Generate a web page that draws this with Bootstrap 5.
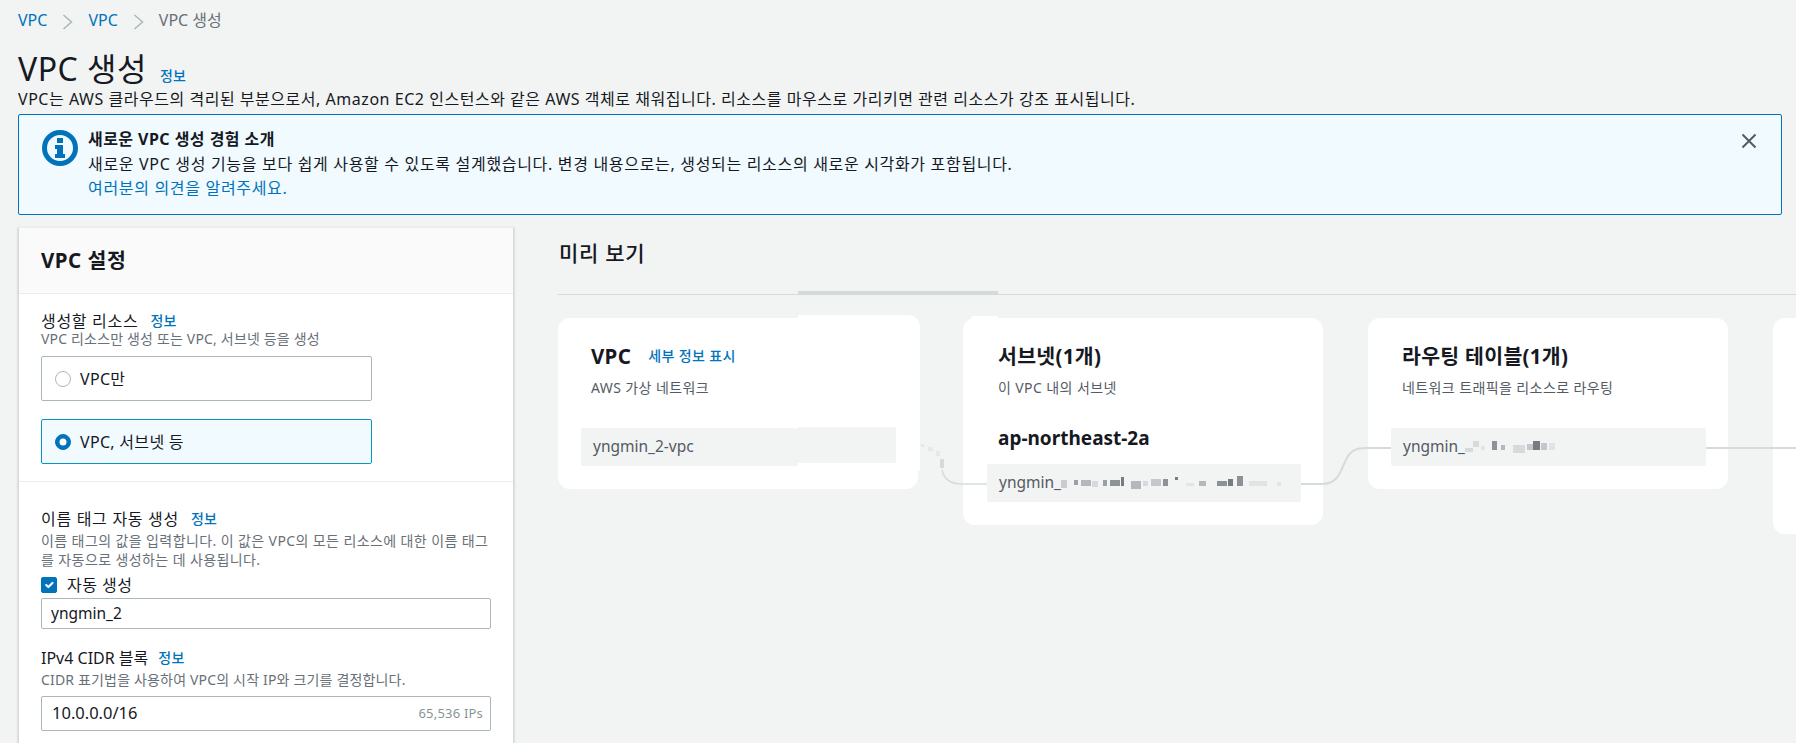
<!DOCTYPE html>
<html lang="ko">
<head>
<meta charset="utf-8">
<title>VPC 생성</title>
<link href="https://cdn.jsdelivr.net/npm/bootstrap@5.3.0/dist/css/bootstrap.min.css" rel="stylesheet">
<style>
html,body{height:743px;overflow:hidden;background:#f2f3f3;}
body{font-family:"Noto Sans","Noto Sans CJK KR",sans-serif;font-size:16px;letter-spacing:.5px;color:#16191f;width:1796px;}
a{text-decoration:none;color:#0073bb;}
.crumbs{height:40px;padding-left:18px;margin:0;align-items:center;font-size:16px;gap:15px;letter-spacing:0;}
.crumbs .breadcrumb-item{padding:0;}
.crumbs .breadcrumb-item::before{display:none;}
.crumbs .breadcrumb-item.active{color:#687078;}
.page-head{padding:11px 0 0 18px;height:49px;gap:13px;}
.page-title{font-size:32px;line-height:36px;font-weight:400;margin:0;letter-spacing:.5px;}
.info-link{font-size:14px;font-weight:500;letter-spacing:.2px;}
.page-desc{margin:0 0 5px 18px;line-height:20px;height:20px;white-space:nowrap;letter-spacing:.53px;}
.notice{margin:0 14px 12px 18px;height:101px;border:1px solid #0073bb;border-radius:2px;background:#f1faff;padding:12px 0 0 23px;position:relative;gap:10px;}
.notice-icon{margin-top:3px;flex:none;}
.notice-line{line-height:24.5px;height:24.5px;white-space:nowrap;letter-spacing:.68px;}
.notice-title{font-weight:700;letter-spacing:.45px;}
.notice-close{position:absolute;left:1721px;top:17px;}
.main-row{height:560px;}
.settings{width:496px;margin-left:18px;flex:none;border-radius:0;border:0;border-left:1px solid #d5dbdb;border-right:1px solid #d5dbdb;border-top:1px solid #eaeded;box-shadow:0 1px 2px rgba(0,28,36,.25);}
.settings .card-header{height:66px;background:#fafafa;border-bottom:1px solid #eaeded;border-radius:0;padding:0 0 0 22px;font-size:20.5px;font-weight:700;line-height:64px;}
.settings .card-body{padding:0;}
.block-one{padding:17px 22px 17px;border-bottom:1px solid #eaeded;}
.block-two{padding:27px 22px 0;}
.field-label{line-height:20px;height:20px;gap:12px;white-space:nowrap;letter-spacing:.7px;}
.field-hint{font-size:14px;color:#687078;line-height:16px;letter-spacing:.17px;}
.choice{width:331px;height:45px;border:1px solid #aab7b8;border-radius:2px;padding-left:13px;gap:9px;margin-top:18px;background:#fff;letter-spacing:.3px;}
.choice-first{margin-top:9px;}
.choice-on{border-color:#0a94c2;background:#f1faff;}
.choice .form-check-input,.auto-check .form-check-input{margin:0;width:16px;height:16px;flex:none;border-color:#aab7b8;}
.choice .form-check-input:checked,.auto-check .form-check-input:checked{background-color:#0073bb;border-color:#0073bb;}
.auto-check{height:18px;margin-top:7px;gap:10px;line-height:18px;}
.auto-check .form-check-input{border-radius:2px;}
.hint-tall{line-height:19px;margin-top:2px;width:450px;letter-spacing:.4px;}
.label-cidr{margin-top:19px;letter-spacing:0;gap:10px;}
.hint-cidr{margin-top:4px;}
.text-input{height:31px;width:450px;border:1px solid #aab7b8;border-radius:2px;padding:0 9px 2px;font-size:15.5px;letter-spacing:0;color:#16191f;margin-top:4px;font-family:inherit;}
.cidr-wrap{width:450px;height:35px;margin-top:8px;}
.cidr-wrap .text-input{height:35px;margin:0;padding-left:10px;font-size:16.5px;}
.cidr-size{position:absolute;right:8px;top:0;line-height:35px;font-size:13px;letter-spacing:.2px;color:#879596;}
.preview{flex:1 1 auto;padding-left:44px;min-width:0;}
.preview-title{font-size:21px;font-weight:500;line-height:24px;height:65px;padding:14px 0 0 1px;margin:0;letter-spacing:.7px;}
.preview-rule{height:3px;border-bottom:1px solid #d5dbdb;position:relative;}
.preview-thumb{position:absolute;left:240px;top:-1px;width:200px;height:3px;background:#d5dbdb;}
.diagram{position:relative;height:400px;}
.node{position:absolute;background:#fff;border-radius:12px;top:23px;}
.node-a{left:0;width:360px;height:171px;}
.node-b{left:405px;width:360px;height:207px;}
.node-c{left:810px;width:360px;height:171px;}
.node-d{left:1215px;width:360px;height:216px;}
.patch{position:absolute;background:#fff;}
.patch-a{left:240px;top:20px;width:122px;height:156px;border-radius:0 12px 0 0;}
.patch-b{left:414px;top:21px;width:26px;height:8px;}
.node-head{position:absolute;top:26px;font-size:20.5px;font-weight:700;line-height:24px;white-space:nowrap;gap:17px;align-items:center;letter-spacing:.3px;}
.node-head a{font-size:14px;font-weight:500;letter-spacing:.4px;}
.node-sub{position:absolute;top:61px;font-size:14px;line-height:18px;color:#545b64;white-space:nowrap;letter-spacing:.4px;}
.node-zone{position:absolute;top:108px;left:35px;font-size:19px;font-weight:700;line-height:24px;letter-spacing:0;}
.name-row{position:absolute;background:#f2f3f3;height:38px;border-radius:2px;padding-left:12px;font-size:15.5px;letter-spacing:0;color:#545b64;white-space:nowrap;align-items:center;}
.name-row svg{flex:none;filter:blur(.6px);}
.row-a{left:23px;top:110px;width:217px;}
.row-a2{position:absolute;left:240px;top:132px;width:98px;height:36px;background:#f2f3f3;}
.row-b{left:24px;top:146px;width:314px;}
.row-c{left:23px;top:110px;width:315px;}
.wires{position:absolute;left:0;top:0;overflow:visible;pointer-events:none;}
.left-33{left:33px;}
.left-34{left:34px;}
.left-35{left:35px;}
</style>
</head>
<body>
<nav aria-label="breadcrumb">
  <ol class="breadcrumb crumbs d-flex">
    <li class="breadcrumb-item"><a href="#">VPC</a></li>
    <li><svg width="11" height="16" viewBox="0 0 11 16"><path d="M1.5 1l8 7-8 7" fill="none" stroke="#aab7b8" stroke-width="1.5"/></svg></li>
    <li class="breadcrumb-item"><a href="#">VPC</a></li>
    <li><svg width="11" height="16" viewBox="0 0 11 16"><path d="M1.5 1l8 7-8 7" fill="none" stroke="#aab7b8" stroke-width="1.5"/></svg></li>
    <li class="breadcrumb-item active" aria-current="page">VPC 생성</li>
  </ol>
</nav>
<header class="page-head d-flex align-items-baseline">
  <h1 class="page-title">VPC 생성</h1>
  <a class="info-link" href="#">정보</a>
</header>
<p class="page-desc">VPC는 AWS 클라우드의 격리된 부분으로서, Amazon EC2 인스턴스와 같은 AWS 객체로 채워집니다. 리소스를 마우스로 가리키면 관련 리소스가 강조 표시됩니다.</p>
<section class="notice d-flex">
  <svg class="notice-icon" width="36" height="36" viewBox="0 0 36 36"><circle cx="18" cy="18" r="15.5" fill="none" stroke="#0073bb" stroke-width="5"/><rect x="15" y="8" width="6" height="5" fill="#0073bb"/><path d="M13 15h8v9h2v4H13v-4h2v-5h-2z" fill="#0073bb"/></svg>
  <div>
    <div class="notice-line notice-title">새로운 VPC 생성 경험 소개</div>
    <div class="notice-line">새로운 VPC 생성 기능을 보다 쉽게 사용할 수 있도록 설계했습니다. 변경 내용으로는, 생성되는 리소스의 새로운 시각화가 포함됩니다.</div>
    <div class="notice-line"><a href="#">여러분의 의견을 알려주세요.</a></div>
  </div>
  <svg class="notice-close" width="18" height="18" viewBox="0 0 18 18" aria-label="닫기"><path d="M2.5 2.5l13 13M15.5 2.5l-13 13" stroke="#545b64" stroke-width="2" fill="none"/></svg>
</section>
<div class="main-row d-flex">
  <section class="card settings">
    <div class="card-header">VPC 설정</div>
    <div class="card-body">
      <div class="block-one">
        <div class="field-label d-flex"><span>생성할 리소스</span><a class="info-link" href="#">정보</a></div>
        <div class="field-hint">VPC 리소스만 생성 또는 VPC, 서브넷 등을 생성</div>
        <label class="choice choice-first d-flex align-items-center"><input class="form-check-input" type="radio" name="res"><span>VPC만</span></label>
        <label class="choice choice-on d-flex align-items-center"><input class="form-check-input" type="radio" name="res" checked><span>VPC, 서브넷 등</span></label>
      </div>
      <div class="block-two">
        <div class="field-label d-flex"><span>이름 태그 자동 생성</span><a class="info-link" href="#">정보</a></div>
        <div class="field-hint hint-tall">이름 태그의 값을 입력합니다. 이 값은 VPC의 모든 리소스에 대한 이름 태그를 자동으로 생성하는 데 사용됩니다.</div>
        <label class="auto-check d-flex align-items-center"><input class="form-check-input" type="checkbox" checked><span>자동 생성</span></label>
        <input class="form-control text-input" type="text" value="yngmin_2" aria-label="이름 태그">
        <div class="field-label label-cidr d-flex"><span>IPv4 CIDR 블록</span><a class="info-link" href="#">정보</a></div>
        <div class="field-hint hint-cidr">CIDR 표기법을 사용하여 VPC의 시작 IP와 크기를 결정합니다.</div>
        <div class="cidr-wrap position-relative">
          <input class="form-control text-input" type="text" value="10.0.0.0/16" aria-label="IPv4 CIDR">
          <span class="cidr-size">65,536 IPs</span>
        </div>
      </div>
    </div>
  </section>
  <section class="preview">
    <h2 class="preview-title">미리 보기</h2>
    <div class="preview-rule"><div class="preview-thumb"></div></div>
    <div class="diagram">
      <div class="patch patch-a"></div>
      <div class="node node-a">
        <div class="node-head d-flex left-33"><span>VPC</span><a href="#">세부 정보 표시</a></div>
        <div class="node-sub left-33">AWS 가상 네트워크</div>
        <div class="name-row d-flex row-a">yngmin_2-vpc</div>
      </div>
      <div class="row-a2"></div>
      <div class="patch patch-b"></div>
      <div class="node node-b">
        <div class="node-head left-35">서브넷(1개)</div>
        <div class="node-sub left-35">이 VPC 내의 서브넷</div>
        <div class="node-zone">ap-northeast-2a</div>
        <div class="name-row d-flex row-b">yngmin_<svg width="232" height="14" viewBox="0 0 232 14"><g fill="#9aa0a6"><rect x="0" y="4" width="6" height="8" fill="#c9ccd0"/><rect x="13" y="4" width="4" height="5"/><rect x="20" y="4" width="10" height="6" fill="#b4b8bc"/><rect x="31" y="5" width="6" height="6" fill="#d7d9dc"/><rect x="42" y="4" width="4" height="6"/><rect x="49" y="4" width="10" height="6" fill="#8d9298"/><rect x="60" y="1" width="3" height="9" fill="#777c83"/><rect x="70" y="5" width="10" height="8" fill="#b4b8bc"/><rect x="82" y="5" width="5" height="5" fill="#d7d9dc"/><rect x="90" y="3" width="10" height="7" fill="#c4c7cb"/><rect x="102" y="3" width="5" height="7" fill="#8d9298"/><rect x="114" y="1" width="3" height="3" fill="#777c83"/><rect x="125" y="7" width="8" height="3" fill="#e1e3e5"/><rect x="138" y="5" width="7" height="5" fill="#b4b8bc"/><rect x="156" y="5" width="10" height="5" fill="#8d9298"/><rect x="167" y="3" width="5" height="7" fill="#777c83"/><rect x="176" y="0" width="6" height="10" fill="#8d9298"/><rect x="188" y="5" width="18" height="5" fill="#e1e3e5"/><rect x="216" y="6" width="4" height="4" fill="#e1e3e5"/></g></svg></div>
      </div>
      <div class="node node-c">
        <div class="node-head left-34">라우팅 테이블(1개)</div>
        <div class="node-sub left-34">네트워크 트래픽을 리소스로 라우팅</div>
        <div class="name-row d-flex row-c">yngmin_<svg width="96" height="14" viewBox="0 0 96 14"><g><rect x="0" y="8" width="8" height="4" fill="#d7d9dc"/><rect x="8" y="1" width="6" height="6" fill="#d7d9dc"/><rect x="16" y="6" width="4" height="4" fill="#e1e3e5"/><rect x="27" y="1" width="5" height="9" fill="#8d9298"/><rect x="36" y="5" width="4" height="5" fill="#b4b8bc"/><rect x="48" y="5" width="12" height="8" fill="#d7d9dc"/><rect x="62" y="4" width="6" height="6" fill="#c4c7cb"/><rect x="68" y="1" width="7" height="9" fill="#777c83"/><rect x="76" y="3" width="6" height="7" fill="#c4c7cb"/><rect x="84" y="3" width="6" height="7" fill="#e1e3e5"/></g></svg></div>
      </div>
      <div class="node node-d"></div>
      <svg class="wires" width="1238" height="300" viewBox="558 295 1238 300">
        <g fill="#e4e8e8"><rect x="921" y="444" width="3" height="3"/><rect x="928" y="447" width="5" height="4"/><rect x="936" y="451" width="4" height="5"/><rect x="940" y="459" width="4" height="9" fill="#d5dbdb"/></g>
        <path d="M942 470C944 479 950 484 962 484H987" fill="none" stroke="#d5dbdb" stroke-width="1.5"/>
        <path d="M1301 484H1322C1338 484 1340 472 1345 462C1349 452 1354 448 1366 448H1391" fill="none" stroke="#d5dbdb" stroke-width="2"/>
        <path d="M1706 448H1796" fill="none" stroke="#d5dbdb" stroke-width="2"/>
      </svg>
    </div>
  </section>
</div>
<script src="https://cdn.jsdelivr.net/npm/bootstrap@5.3.0/dist/js/bootstrap.bundle.min.js"></script>
</body>
</html>
